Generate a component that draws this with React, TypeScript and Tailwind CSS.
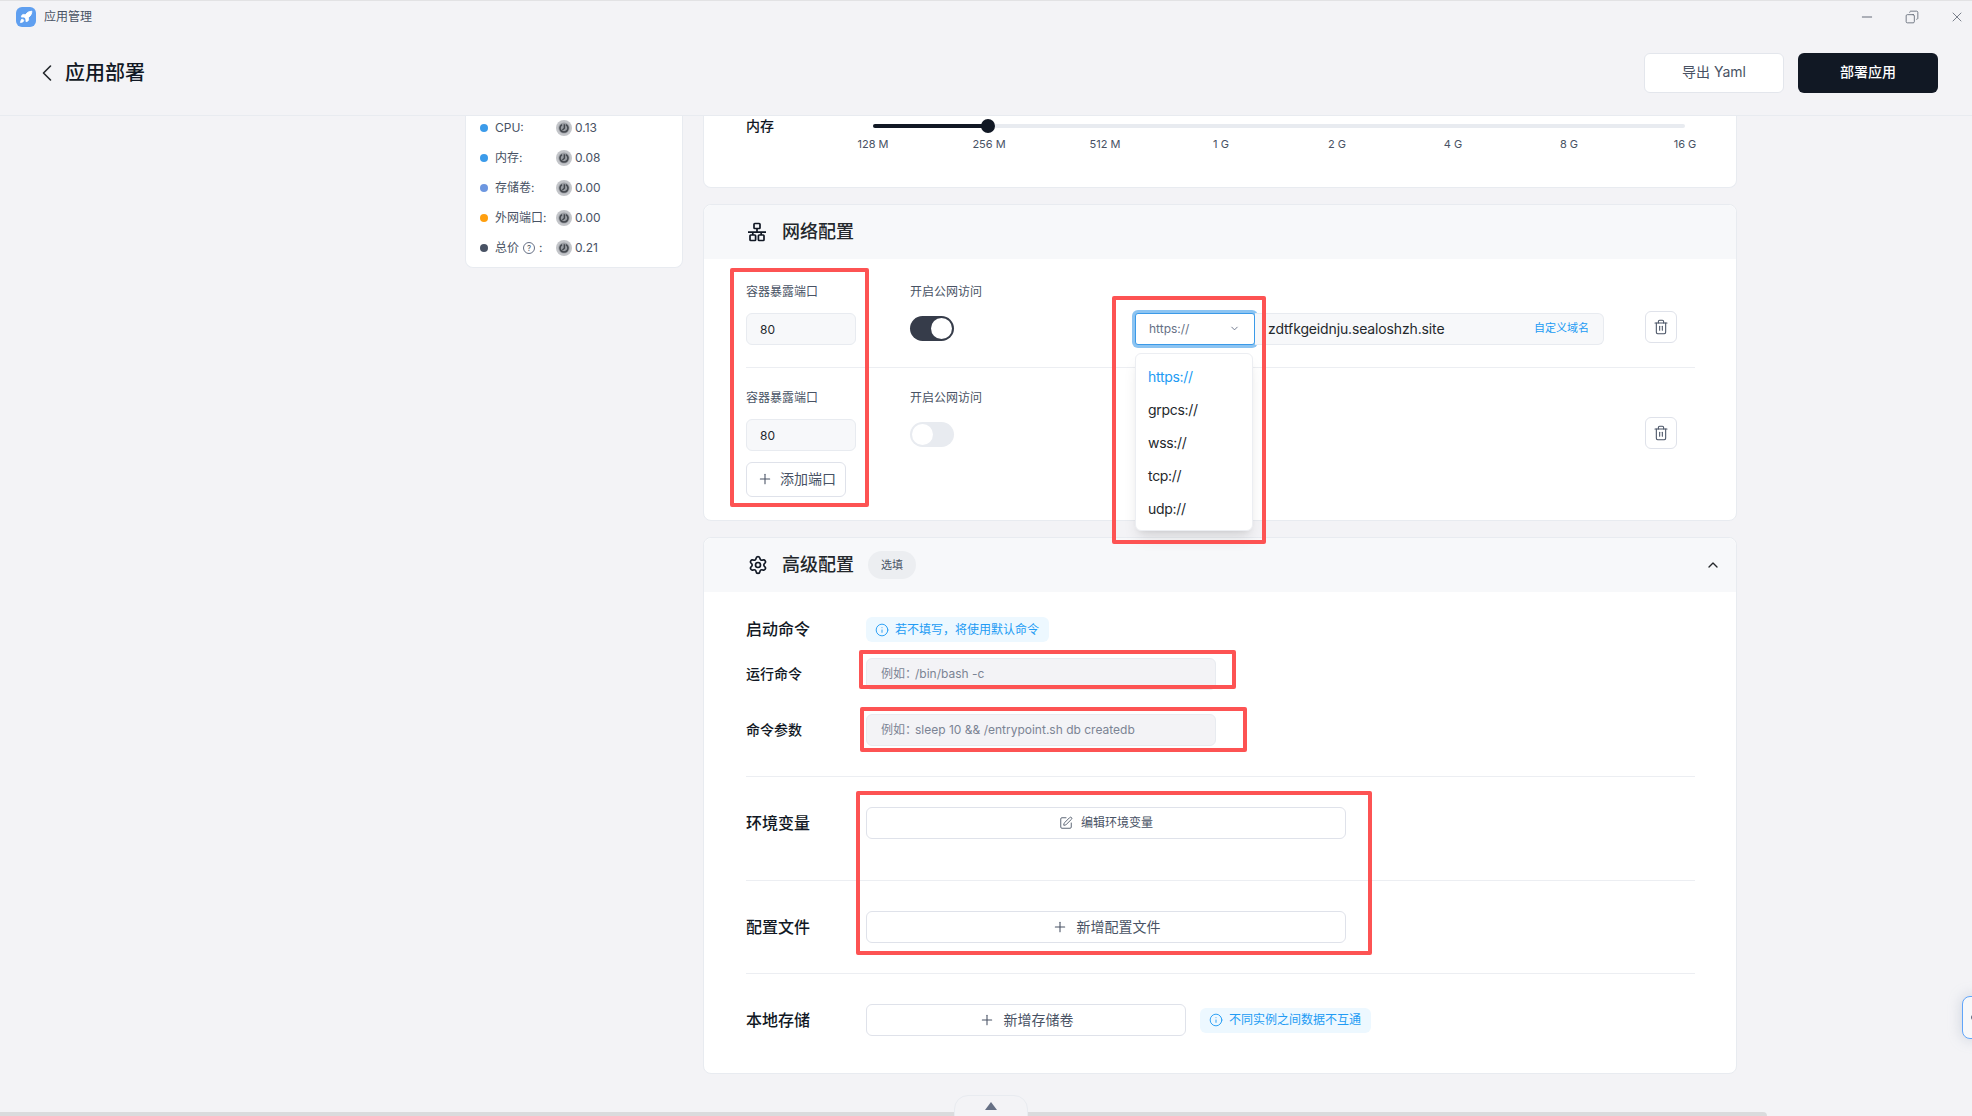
import { ChevronDown, ChevronLeft, ChevronUp, Copy, Info, Minus, Plus, Rocket, Settings, SquarePen, Trash2, X } from 'lucide-react';

const prices = [
  { label: 'CPU:', value: '0.13', dot: 'bg-[#3b9bea]' },
  { label: '内存:', value: '0.08', dot: 'bg-[#3b9bea]' },
  { label: '存储卷:', value: '0.00', dot: 'bg-[#6d97e0]' },
  { label: '外网端口:', value: '0.00', dot: 'bg-[#ff9f0f]' },
  { label: '总价', value: '0.21', dot: 'bg-[#485264]', help: true },
];

const marks = ['128 M', '256 M', '512 M', '1 G', '2 G', '4 G', '8 G', '16 G'];
const protocols = ['https://', 'grpcs://', 'wss://', 'tcp://', 'udp://'];

function Coin() {
  return (
    <svg viewBox="0 0 16 16" className="h-4 w-4 shrink-0">
      <circle cx="8" cy="8" r="8" fill="#c3c5c9" />
      <circle cx="8" cy="8" r="5.6" fill="#9a9da3" />
      <path d="M6 4.6a4 4 0 1 0 4 0" fill="none" stroke="#45494f" strokeWidth="1.6" />
      <path d="M8.4 4.2v4L6.4 10" fill="none" stroke="#45494f" strokeWidth="1.5" />
    </svg>
  );
}

function NetworkIcon() {
  return (
    <svg viewBox="0 0 20 20" className="h-5 w-5" fill="none" stroke="#111824" strokeWidth="1.7">
      <rect x="7" y="1.5" width="6" height="5" rx="0.8" />
      <rect x="3" y="13" width="5.6" height="5.5" rx="0.8" />
      <rect x="11.4" y="13" width="5.6" height="5.5" rx="0.8" />
      <path d="M10 6.5v3.6M1 10.1h18M5.8 10.1V13M14.2 10.1V13" />
    </svg>
  );
}

function PortField({ children }: { children?: React.ReactNode }) {
  return (
    <div className="w-[164px] shrink-0">
      <div className="h-4 text-xs leading-4 text-[#485264]">容器暴露端口</div>
      <div className="mt-[13px] flex h-8 w-[110px] items-center rounded-md border border-[#e8ebf0] bg-[#f7f8fa] pl-[13px] pt-px text-xs text-[#24282c]">80</div>
      {children}
    </div>
  );
}

function Toggle({ on }: { on: boolean }) {
  return (
    <div className="w-[226px] shrink-0">
      <div className="h-4 text-xs leading-4 text-[#485264]">开启公网访问</div>
      <div className="mt-[16px] flex h-[25px] w-11 items-center">
        <div className={on ? 'flex h-[25px] w-11 items-center justify-end rounded-full bg-[#363c4a] px-[2px]' : 'flex h-[25px] w-11 items-center justify-start rounded-full bg-[#e8ebf0] px-[2px]'}>
          <div className="h-[21px] w-[21px] rounded-full bg-white" />
        </div>
      </div>
    </div>
  );
}

function TrashButton() {
  return (
    <div className="ml-auto mr-[18px] mt-[27px] flex h-8 w-8 shrink-0 items-center justify-center rounded-md border border-[#dfe2ea] bg-white text-[#485264]">
      <Trash2 className="h-4 w-4" strokeWidth={1.6} />
    </div>
  );
}

function Tip({ text }: { text: string }) {
  return (
    <div className="flex h-[25px] items-center gap-[6px] rounded-md bg-[#edf8ff] pl-[9px] pr-[10px] text-xs text-[#219bf4]">
      <Info className="h-[14px] w-[14px] shrink-0" strokeWidth={1.6} />
      {text}
    </div>
  );
}

function Divider() {
  return <div className="h-px bg-[#eceef2]" />;
}

export default function App() {
  return (
    <div className="relative h-[1116px] w-[1972px] overflow-hidden border-t border-[#e2e2e4] bg-[#f3f3f6] [font-family:Inter,'Noto_Sans_CJK_SC',sans-serif] text-[#111824]">
      {/* title bar */}
      <div className="flex h-[31px] items-center pl-4">
        <div className="flex h-5 w-5 items-center justify-center rounded-md bg-[#5f9ff0]">
          <Rocket className="h-[14px] w-[14px] fill-white text-white" strokeWidth={1.5} />
        </div>
        <span className="ml-2 text-xs text-[#485264]">应用管理</span>
        <div className="ml-auto flex items-center gap-[30px] pr-[7px] text-[#5a6270]">
          <Minus className="h-4 w-4" strokeWidth={1.4} />
          <Copy className="h-[14px] w-[14px] -scale-x-100" strokeWidth={1.4} />
          <X className="h-4 w-4" strokeWidth={1.2} />
        </div>
      </div>

      {/* page header */}
      <div className="flex h-[84px] items-center border-b border-[#e8ebf0] pb-[2px] pl-[33px] pr-[34px]">
        <ChevronLeft className="h-7 w-7 text-[#24282c]" strokeWidth={1.4} />
        <h1 className="ml-[4px] text-xl font-medium text-[#111824]">应用部署</h1>
        <div className="ml-auto flex gap-[14px]">
          <button className="h-10 w-[140px] rounded-md border border-[#e3e6ec] bg-white pb-px text-sm text-[#485264]">导出 Yaml</button>
          <button className="h-10 w-[140px] rounded-md bg-[#111824] pb-px text-sm font-medium text-white">部署应用</button>
        </div>
      </div>

      <div className="flex items-start gap-5 pl-[465px]">
        {/* price summary */}
        <div className="w-[218px] shrink-0 overflow-hidden rounded-b-lg border-x border-b border-[#e8ebf0] bg-white pb-1 pl-[14px]">
          <div className="-mt-[3px]">
            {prices.map((p) => (
              <div key={p.label} className="flex h-[30px] items-center text-xs text-[#485264]">
                <span className={`h-2 w-2 rounded-full ${p.dot}`} />
                <span className="ml-[7px] flex w-[60px] items-center whitespace-nowrap">
                  {p.label}
                  {p.help && (
                    <>
                      <span className="ml-1 flex h-3 w-3 items-center justify-center rounded-full border border-[#667085] text-[8px] leading-none">?</span>
                      <span className="ml-1">:</span>
                    </>
                  )}
                </span>
                <span className="ml-[1px]"><Coin /></span>
                <span className="ml-[3px]">{p.value}</span>
              </div>
            ))}
          </div>
        </div>

        <div className="w-[1034px] shrink-0">
          {/* memory slider card */}
          <div className="h-[72px] rounded-b-lg border-x border-b border-[#e8ebf0] bg-white pl-[42px]">
            <div className="flex">
              <div className="h-5 w-[127px] text-sm font-medium leading-5">内存</div>
              <div className="w-[812px] pt-2">
                <div className="relative h-1 rounded-full bg-[#e8ebf0]">
                  <div className="h-1 w-[115px] rounded-full bg-[#111824]" />
                  <div className="absolute left-[108px] top-[-5px] h-[14px] w-[14px] rounded-full bg-[#111824]" />
                </div>
                <div className="mt-[9px] flex justify-between">
                  {marks.map((m) => (
                    <div key={m} className="flex w-0 justify-center whitespace-nowrap text-[11px] leading-[14px] text-[#485264]">{m}</div>
                  ))}
                </div>
              </div>
            </div>
          </div>

          {/* network card */}
          <div className="mt-4 h-[317px] rounded-lg border border-[#e8ebf0] bg-white">
            <div className="flex h-[54px] items-center rounded-t-lg bg-[#f7f8fa] pl-[43px]">
              <NetworkIcon />
              <span className="ml-[15px] text-lg font-medium text-[#24282c]">网络配置</span>
            </div>
            <div className="pl-[42px] pr-[41px]">
              <div className="flex h-[108px] pt-[25px]">
                <PortField />
                <Toggle on />
                <div className="relative ml-[-1px] mt-[29px] flex h-8 items-center">
                  <div className="flex h-8 w-[120px] items-center justify-between rounded-[3px] border border-[#3b9ae8] bg-white pb-px pl-[13px] pr-[14px] text-xs text-[#667085] ring-[3px] ring-[#8cc4f2]">
                    https://
                    <ChevronDown className="h-[11px] w-[11px]" strokeWidth={2} />
                  </div>
                  <div className="flex h-8 w-[349px] items-center justify-between rounded-r-md border-y border-r border-[#e8ebf0] bg-[#f7f8fa] pl-[13px] pr-[14px] text-sm text-[#24282c]">
                    <span className="tracking-[-0.14px]">zdtfkgeidnju.sealoshzh.site</span>
                    <span className="text-[11px] text-[#219bf4]">自定义域名</span>
                  </div>
                  {/* open protocol menu */}
                  <div className="absolute left-0 top-10 z-10 w-[118px] rounded-md border border-[#eceef2] bg-white pb-[5px] pl-3 pt-[6px] text-sm tracking-[-0.3px] shadow-lg">
                    {protocols.map((p, i) => (
                      <div key={p} className={i === 0 ? 'flex h-[33px] items-center text-[#219bf4]' : 'flex h-[33px] items-center text-[#24282c]'}>{p}</div>
                    ))}
                  </div>
                </div>
                <TrashButton />
              </div>
              <Divider />
              <div className="flex pt-[22px]">
                <PortField>
                  <div className="mt-[11px] flex h-[35px] w-[100px] items-center rounded-md border border-[#dfe2ea] bg-white pb-px pl-[10px] text-sm text-[#485264]">
                    <Plus className="h-4 w-4" strokeWidth={1.6} />
                    <span className="ml-[7px]">添加端口</span>
                  </div>
                </PortField>
                <Toggle on={false} />
                <TrashButton />
              </div>
            </div>
          </div>

          {/* advanced card */}
          <div className="mt-4 rounded-lg border border-[#e8ebf0] bg-white">
            <div className="flex h-[54px] items-center rounded-t-lg bg-[#f7f8fa] pl-[44px] pr-[15px]">
              <Settings className="h-5 w-5" strokeWidth={2} />
              <span className="ml-[14px] text-lg font-medium text-[#24282c]">高级配置</span>
              <span className="ml-[14px] flex h-7 w-12 items-center justify-center rounded-full bg-[#eceef1] text-[11px] text-[#485264]">选填</span>
              <ChevronUp className="ml-auto h-4 w-4 text-[#24282c]" strokeWidth={2} />
            </div>
            <div className="pb-[37px] pl-[42px] pr-[41px] pt-[25px]">
              <div className="flex h-[25px] items-center">
                <div className="w-[120px] pb-[2px] text-base font-medium">启动命令</div>
                <Tip text="若不填写，将使用默认命令" />
              </div>
              <div className="mt-4 flex items-center">
                <div className="w-[120px] text-sm font-medium">运行命令</div>
                <div className="flex h-8 w-[350px] items-center rounded-md border border-[#e8ebf0] bg-[#f3f3f6] pl-[14px] text-xs text-[#7b8494]"><span className="-mr-[2px]">例如：</span>/bin/bash -c</div>
              </div>
              <div className="mt-6 flex items-center">
                <div className="w-[120px] text-sm font-medium">命令参数</div>
                <div className="flex h-8 w-[350px] items-center rounded-md border border-[#e8ebf0] bg-[#f3f3f6] pl-[14px] text-xs text-[#7b8494]"><span className="-mr-[2px]">例如：</span>sleep 10 &amp;&amp; /entrypoint.sh db createdb</div>
              </div>
              <div className="mt-[30px]"><Divider /></div>
              <div className="mt-[30px] flex items-center">
                <div className="w-[120px] text-base font-medium">环境变量</div>
                <div className="flex h-8 w-[480px] items-center justify-center gap-[8px] rounded-md border border-[#dfe2ea] bg-white text-xs text-[#485264]">
                  <SquarePen className="h-[14px] w-[14px]" strokeWidth={1.5} />
                  编辑环境变量
                </div>
              </div>
              <div className="mt-[41px]"><Divider /></div>
              <div className="mt-[30px] flex items-center">
                <div className="w-[120px] text-base font-medium">配置文件</div>
                <div className="flex h-8 w-[480px] items-center justify-center gap-[9px] rounded-md border border-[#dfe2ea] bg-white pb-px text-sm text-[#485264]">
                  <Plus className="h-4 w-4" strokeWidth={1.6} />
                  新增配置文件
                </div>
              </div>
              <div className="mt-[30px]"><Divider /></div>
              <div className="mt-[30px] flex items-center">
                <div className="w-[120px] text-base font-medium">本地存储</div>
                <div className="flex h-8 w-[320px] items-center justify-center gap-[9px] rounded-md border border-[#dfe2ea] bg-white pb-px text-sm text-[#485264]">
                  <Plus className="h-4 w-4" strokeWidth={1.6} />
                  新增存储卷
                </div>
                <div className="ml-[14px]"><Tip text="不同实例之间数据不互通" /></div>
              </div>
            </div>
          </div>
        </div>
      </div>

      {/* annotation boxes */}
      <div className="absolute left-[730px] top-[267px] z-20 h-[239px] w-[139px] rounded-[2px] border-[4px] border-[#fd5353]" />
      <div className="absolute left-[1112px] top-[295px] z-20 h-[248px] w-[154px] rounded-[2px] border-[4px] border-[#fd5353]" />
      <div className="absolute left-[859px] top-[649px] z-20 h-[39px] w-[377px] rounded-[2px] border-[4px] border-[#fd5353]" />
      <div className="absolute left-[860px] top-[706px] z-20 h-[45px] w-[387px] rounded-[2px] border-[4px] border-[#fd5353]" />
      <div className="absolute left-[856px] top-[790px] z-20 h-[164px] w-[516px] rounded-[2px] border-[4px] border-[#fd5353]" />

      {/* bottom scrollbar and drawer handle */}
      <div className="absolute bottom-0 left-0 h-1 w-[1767px] rounded-tr-md bg-[#dadbdd]" />
      <div className="absolute bottom-[-1px] left-[954px] flex h-[22px] w-[74px] items-center justify-center rounded-t-[14px] border border-[#e8ebf0] bg-[#f3f3f6]">
        <svg viewBox="0 0 12 8" className="h-2 w-3"><path d="M6 0l6 8H0z" fill="#667085" /></svg>
      </div>

      {/* floating side tab */}
      <div className="absolute left-[1962px] top-[995px] flex h-[43px] w-5 items-center rounded-l-lg border border-[#60a5fa] bg-[#f7f8fa] pl-2 shadow-[0_0_14px_rgba(148,163,184,0.4)]">
        <span className="h-[5px] w-[5px] rounded-full bg-[#667085]" />
      </div>
    </div>
  );
}
